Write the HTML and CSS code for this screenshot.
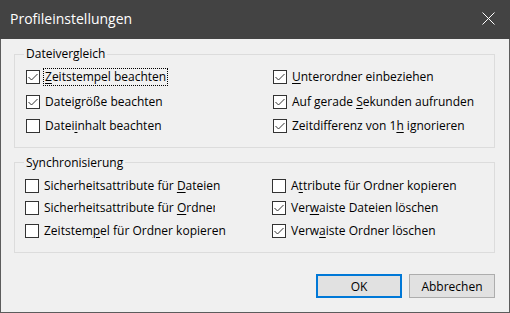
FILE: index.html
```html
<!DOCTYPE html>
<html lang="de">

<head>
    <meta charset="UTF-8">
    <meta name="viewport" content="width=device-width, initial-scale=1.0">
    <title>Profileinstellungen</title>
    <link rel="stylesheet" href="styles.css">
</head>

<body>
    <div class="window">
        <div class="titlebar">
            <span class="title">Profileinstellungen</span>
            <span class="close">
                <svg width="13" height="13" viewBox="0 0 13 13">
                    <path d="M0.5 0.5 L12.5 12.5 M12.5 0.5 L0.5 12.5" stroke="#fff" stroke-width="1" fill="none"/>
                </svg>
            </span>
        </div>

        <div class="dialog-body">
            <!-- Dateivergleich -->
            <fieldset class="group group-compare">
                <legend>Dateivergleich</legend>
                <div class="options">
                    <label class="option"><span class="box checked"></span><span class="text focus"><u>Z</u>eitstempel beachten</span></label>
                    <label class="option"><span class="box checked"></span><span class="text"><u>U</u>nterordner einbeziehen</span></label>
                    <label class="option"><span class="box checked"></span><span class="text">Datei<u>g</u>röße beachten</span></label>
                    <label class="option"><span class="box checked"></span><span class="text">Auf gerade <u>S</u>ekunden aufrunden</span></label>
                    <label class="option"><span class="box"></span><span class="text">Datei<u>i</u>nhalt beachten</span></label>
                    <label class="option"><span class="box checked"></span><span class="text">Zeitdifferenz von 1<u>h</u> ignorieren</span></label>
                </div>
            </fieldset>

            <!-- Synchronisierung -->
            <fieldset class="group group-sync">
                <legend>Synchronisierung</legend>
                <div class="options">
                    <label class="option"><span class="box"></span><span class="text">Sicherheitsattribute für <u>D</u>ateien</span></label>
                    <label class="option"><span class="box"></span><span class="text">A<u>t</u>tribute für Ordner kopieren</span></label>
                    <label class="option"><span class="box"></span><span class="text clip">Sicherheitsattribute für <u>O</u>rdner</span></label>
                    <label class="option"><span class="box checked"></span><span class="text">Ver<u>w</u>aiste Dateien löschen</span></label>
                    <label class="option"><span class="box"></span><span class="text">Zeitstem<u>p</u>el für Ordner kopieren</span></label>
                    <label class="option"><span class="box checked"></span><span class="text">Verw<u>a</u>iste Ordner löschen</span></label>
                </div>
            </fieldset>

            <div class="buttons">
                <button class="btn btn-default">OK</button>
                <button class="btn">Abbrechen</button>
            </div>
        </div>
    </div>
</body>

</html>
```

FILE: styles.css
```css
body {
    margin: 0;
    font-family: "Open Sans", "Noto Sans", sans-serif;
    font-size: 12px;
    color: #000;
    background: #f0f0f0;
}

.window {
    width: 510px;
    height: 313px;
    box-sizing: border-box;
    border: 1px solid #5c5c5c;
    border-top: none;
    background: #f0f0f0;
}

/* Title bar */
.titlebar {
    height: 37px;
    margin: 0 -1px;
    background: #434343;
    display: flex;
    align-items: center;
    justify-content: space-between;
    padding: 0 15px 2px 10px;
}

.title {
    color: #fff;
    font-size: 14px;
}

.close {
    display: flex;
}

/* Body */
.dialog-body {
    padding: 7px 14px 0 13px;
}

.group {
    margin: 0;
    padding: 0;
    border: 1px solid #dcdcdc;
}

.group legend {
    margin-left: 9px;
    padding: 0 2px;
    line-height: 16px;
}

.group-sync {
    margin-top: 7px;
}

.options {
    display: grid;
    grid-template-columns: 247px 1fr;
}

.group-compare .options {
    padding: 3px 0 8px 11px;
    grid-auto-rows: 24.5px;
}

.group-sync .options {
    padding: 4px 0 10px 10px;
    grid-auto-rows: 22.5px;
}

.option {
    display: flex;
    align-items: center;
    gap: 5px;
    line-height: 16px;
    white-space: nowrap;
}

.box {
    width: 14px;
    height: 14px;
    box-sizing: border-box;
    border: 1px solid #333;
    background: #fff;
    flex: none;
}

.box.checked {
    background: #fff url("data:image/svg+xml,%3Csvg xmlns='http://www.w3.org/2000/svg' width='12' height='12'%3E%3Cpath d='M1.5 6 L4.5 9 L10.5 3' stroke='%23333' stroke-width='1' fill='none'/%3E%3C/svg%3E") center no-repeat;
}

.text u {
    text-decoration-thickness: 1px;
    text-underline-offset: 2px;
}

.focus {
    outline: 1px dotted #000;
    outline-offset: 0;
    padding: 0 1px;
    margin-left: -1px;
}

/* the reference cuts this label off after "Ordne" */
.clip {
    width: 171px;
    overflow: hidden;
}

/* Buttons */
.buttons {
    display: flex;
    justify-content: flex-end;
    gap: 7px;
    margin-top: 21px;
}

.btn {
    width: 86px;
    height: 24px;
    font-family: inherit;
    font-size: 12px;
    background: #e1e1e1;
    border: 1px solid #adadad;
    padding: 0;
}

.btn-default {
    border: 2px solid #0078d7;
}
```
